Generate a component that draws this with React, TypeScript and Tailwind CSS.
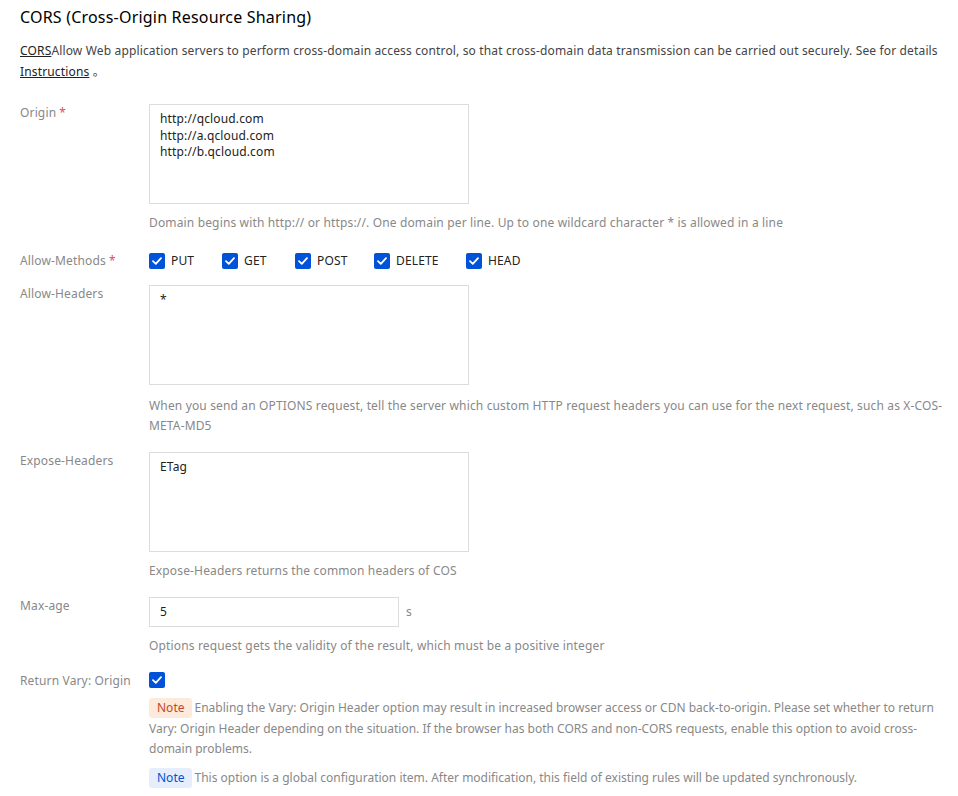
import React from "react";

const Check = ({ size = 16 }: { size?: number }) => (
  <span className="inline-flex items-center justify-center bg-[#0052d9] rounded-[2px] shrink-0" style={{ width: size, height: size }}>
    <svg width="10" height="8" viewBox="0 0 10 8" fill="none">
      <path d="M1 4.2 L3.8 6.8 L9 1.2" stroke="white" strokeWidth="1.8" strokeLinecap="round" strokeLinejoin="round" />
    </svg>
  </span>
);

const Label = ({ children, req }: { children: React.ReactNode; req?: boolean }) => (
  <div className="w-[129px] shrink-0 text-[12px] leading-[18px] text-[#888]">
    {children}
    {req && <span className="text-[#e34d59] ml-[3px]">*</span>}
  </div>
);

const Area = ({ lines }: { lines: string[] }) => (
  <div className="w-[320px] h-[100px] border border-[#dcdcdc] bg-white px-[10px] pt-[6px] text-[12px] leading-[16.5px] text-[#222]">
    {lines.map((l) => (
      <div key={l}>{l}</div>
    ))}
  </div>
);

const Help = ({ children, mt = "mt-[9px]" }: { children: React.ReactNode; mt?: string }) => (
  <div className={`${mt} text-[12px] leading-[20px] text-[#888]`}>{children}</div>
);

export default function App() {
  const methods = [
    { m: "PUT", w: "w-[73px]" },
    { m: "GET", w: "w-[73px]" },
    { m: "POST", w: "w-[79px]" },
    { m: "DELETE", w: "w-[92px]" },
    { m: "HEAD", w: "" },
  ];
  return (
    <div
      className="w-[958px] h-[796px] bg-white pl-[20px] pr-[8px] pt-[5px] tracking-[0.15px]"
      style={{ fontFamily: '"Noto Sans", "Noto Sans CJK SC", sans-serif' }}
    >
      <div className="text-[16px] leading-[24px] text-[#000] tracking-[0.2px]">CORS (Cross-Origin Resource Sharing)</div>
      <div className="mt-[11px] pr-[2px] text-[12px] leading-[21px] text-[#444]">
        <span className="underline text-[#222]">CORS</span>Allow Web application servers to perform cross-domain access control, so that cross-domain data transmission can be carried out securely. See for details{" "}
        <span className="underline text-[#222]">Instructions</span> 。
      </div>

      <div className="flex mt-[22px]">
        <Label req>Origin</Label>
        <div className="flex-1">
          <Area lines={["http://qcloud.com", "http://a.qcloud.com", "http://b.qcloud.com"]} />
          <Help>Domain begins with http:// or https://. One domain per line. Up to one wildcard character * is allowed in a line</Help>
        </div>
      </div>

      <div className="flex mt-[18px] items-center">
        <div className="w-[129px] shrink-0 text-[12px] leading-[20px] text-[#888]">
          Allow-Methods<span className="text-[#e34d59] ml-[3px]">*</span>
        </div>
        <div className="flex items-center">
          {methods.map(({ m, w }) => (
            <div key={m} className={`flex items-center gap-[6px] text-[12px] leading-[20px] text-[#222] shrink-0 ${w}`}>
              <Check />
              <span>{m}</span>
            </div>
          ))}
        </div>
      </div>

      <div className="flex mt-[14px]">
        <Label>Allow-Headers</Label>
        <div className="flex-1">
          <Area lines={["*"]} />
          <Help mt="mt-[11px]">
            When you send an OPTIONS request, tell the server which custom HTTP request headers you can use for the next request, such as X-COS-META-MD5
          </Help>
        </div>
      </div>

      <div className="flex mt-[16px]">
        <Label>Expose-Headers</Label>
        <div className="flex-1">
          <Area lines={["ETag"]} />
          <Help>Expose-Headers returns the common headers of COS</Help>
        </div>
      </div>

      <div className="flex mt-[16px]">
        <Label>Max-age</Label>
        <div className="flex-1">
          <div className="flex items-center">
            <div className="w-[250px] h-[30px] border border-[#dcdcdc] px-[10px] flex items-center text-[12px] text-[#222]">5</div>
            <span className="ml-[7px] text-[12px] text-[#888]">s</span>
          </div>
          <Help>Options request gets the validity of the result, which must be a positive integer</Help>
        </div>
      </div>

      <div className="flex mt-[16px]">
        <div className="w-[129px] shrink-0 text-[12px] leading-[18px] text-[#888]">Return Vary: Origin</div>
        <div className="flex-1">
          <div className="flex">
            <Check />
          </div>
          <div className="mt-[10px] text-[12px] leading-[20.5px] text-[#888] tracking-normal">
            <span className="inline-block px-[8px] h-[20px] leading-[20px] align-top rounded-[3px] bg-[#fdeadb] text-[#c9442a] mr-[2px]">Note</span>
            Enabling the Vary: Origin Header option may result in increased browser access or CDN back-to-origin. Please set whether to return Vary: Origin Header depending on the situation. If the browser has both CORS and non-CORS requests, enable this option to avoid cross-domain problems.
          </div>
          <div className="mt-[8px] text-[12px] leading-[20px] text-[#888] tracking-normal">
            <span className="inline-block px-[8px] h-[20px] leading-[20px] align-top rounded-[3px] bg-[#e6edfd] text-[#0052d9] mr-[2px]">Note</span>
            This option is a global configuration item. After modification, this field of existing rules will be updated synchronously.
          </div>
        </div>
      </div>
    </div>
  );
}
